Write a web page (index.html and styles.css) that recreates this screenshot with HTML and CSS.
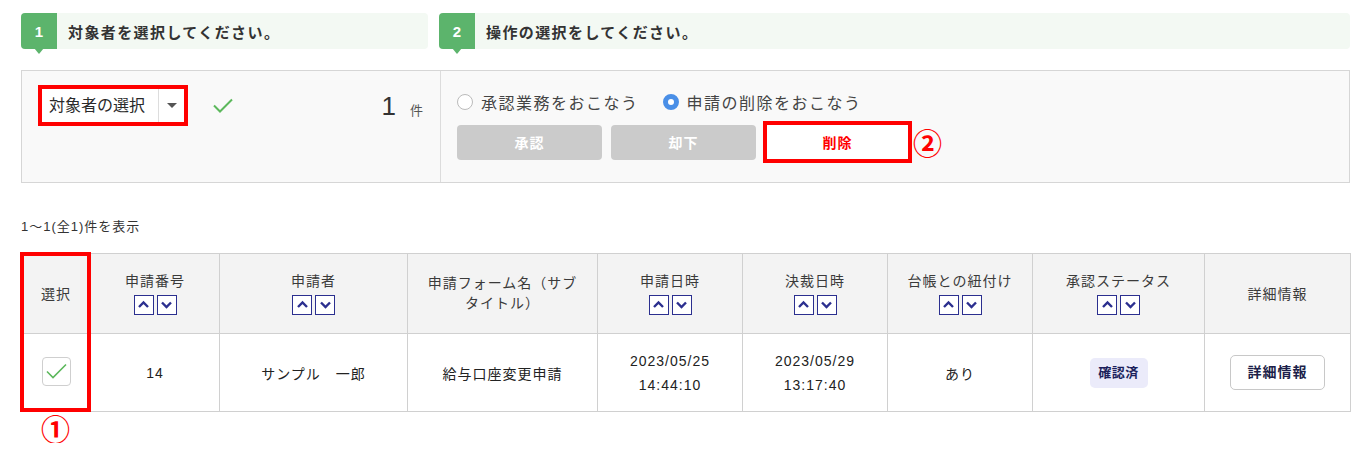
FILE: index.html
```html
<!DOCTYPE html>
<html lang="ja">
<head>
<meta charset="utf-8">
<title>申請一覧</title>
<link rel="stylesheet" href="styles.css">
</head>
<body>
<div class="page">
  <div class="steps">
    <div class="step step1"><span class="badge">1</span><span class="step-title">対象者を選択してください。</span></div>
    <div class="step step2"><span class="badge">2</span><span class="step-title">操作の選択をしてください。</span></div>
  </div>

  <div class="panel">
    <div class="panel-left">
      <div class="hl-select">
        <div class="select"><span class="select-text">対象者の選択</span><span class="select-caret"><span class="tri"></span></span></div>
      </div>
      <svg class="ok" width="20" height="15" viewBox="0 0 20 15"><polyline points="1,7.5 7,13.5 19,1.5" fill="none" stroke="#5cb85c" stroke-width="2"/></svg>
      <div class="count"><span class="num">1</span><span class="unit">件</span></div>
    </div>
    <div class="panel-right">
      <div class="radios">
        <span class="radio"><span class="rdot"></span><span class="rlabel">承認業務をおこなう</span></span>
        <span class="radio on"><span class="rdot"></span><span class="rlabel">申請の削除をおこなう</span></span>
      </div>
      <div class="actions">
        <span class="btn disabled">承認</span>
        <span class="btn disabled btn2">却下</span>
        <span class="btn danger">削除</span>
        <span class="circ">②</span>
      </div>
    </div>
  </div>

  <p class="result">1〜1(全1)件を表示</p>

  <div class="table-wrap">
    <table class="list">
      <colgroup>
        <col style="width:69px"><col style="width:129px"><col style="width:188px"><col style="width:190px"><col style="width:145px"><col style="width:145px"><col style="width:145px"><col style="width:172px"><col style="width:146px">
      </colgroup>
      <thead>
        <tr>
          <th>選択</th>
          <th><div class="th-label">申請番号</div><div class="sort"><span class="sb"><svg width="17" height="17" viewBox="0 0 17 17"><polyline points="4,11 8.5,6.5 13,11" fill="none" stroke="#2b2f8f" stroke-width="2.4"/></svg></span><span class="sb"><svg width="17" height="17" viewBox="0 0 17 17"><polyline points="4,6.5 8.5,11 13,6.5" fill="none" stroke="#2b2f8f" stroke-width="2.4"/></svg></span></div></th>
          <th><div class="th-label">申請者</div><div class="sort"><span class="sb"><svg width="17" height="17" viewBox="0 0 17 17"><polyline points="4,11 8.5,6.5 13,11" fill="none" stroke="#2b2f8f" stroke-width="2.4"/></svg></span><span class="sb"><svg width="17" height="17" viewBox="0 0 17 17"><polyline points="4,6.5 8.5,11 13,6.5" fill="none" stroke="#2b2f8f" stroke-width="2.4"/></svg></span></div></th>
          <th><div class="th-label">申請フォーム名（サブ<br>タイトル）</div></th>
          <th><div class="th-label">申請日時</div><div class="sort"><span class="sb"><svg width="17" height="17" viewBox="0 0 17 17"><polyline points="4,11 8.5,6.5 13,11" fill="none" stroke="#2b2f8f" stroke-width="2.4"/></svg></span><span class="sb"><svg width="17" height="17" viewBox="0 0 17 17"><polyline points="4,6.5 8.5,11 13,6.5" fill="none" stroke="#2b2f8f" stroke-width="2.4"/></svg></span></div></th>
          <th><div class="th-label">決裁日時</div><div class="sort"><span class="sb"><svg width="17" height="17" viewBox="0 0 17 17"><polyline points="4,11 8.5,6.5 13,11" fill="none" stroke="#2b2f8f" stroke-width="2.4"/></svg></span><span class="sb"><svg width="17" height="17" viewBox="0 0 17 17"><polyline points="4,6.5 8.5,11 13,6.5" fill="none" stroke="#2b2f8f" stroke-width="2.4"/></svg></span></div></th>
          <th><div class="th-label">台帳との紐付け</div><div class="sort"><span class="sb"><svg width="17" height="17" viewBox="0 0 17 17"><polyline points="4,11 8.5,6.5 13,11" fill="none" stroke="#2b2f8f" stroke-width="2.4"/></svg></span><span class="sb"><svg width="17" height="17" viewBox="0 0 17 17"><polyline points="4,6.5 8.5,11 13,6.5" fill="none" stroke="#2b2f8f" stroke-width="2.4"/></svg></span></div></th>
          <th><div class="th-label">承認ステータス</div><div class="sort"><span class="sb"><svg width="17" height="17" viewBox="0 0 17 17"><polyline points="4,11 8.5,6.5 13,11" fill="none" stroke="#2b2f8f" stroke-width="2.4"/></svg></span><span class="sb"><svg width="17" height="17" viewBox="0 0 17 17"><polyline points="4,6.5 8.5,11 13,6.5" fill="none" stroke="#2b2f8f" stroke-width="2.4"/></svg></span></div></th>
          <th>詳細情報</th>
        </tr>
      </thead>
      <tbody>
        <tr>
          <td><span class="cb"><svg width="27" height="27" viewBox="0 0 27 27"><polyline points="4,13.5 10,19.5 23,6.5" fill="none" stroke="#5cb85c" stroke-width="1.6"/></svg></span></td>
          <td>14</td>
          <td>サンプル　一郎</td>
          <td>給与口座変更申請</td>
          <td class="dt">2023/05/25<br>14:44:10</td>
          <td class="dt">2023/05/29<br>13:17:40</td>
          <td>あり</td>
          <td><span class="status">確認済</span></td>
          <td><span class="detail">詳細情報</span></td>
        </tr>
      </tbody>
    </table>
    <div class="mark"></div>
  </div>
  <div class="circ circ1">①</div>
</div>
</body>
</html>
```

FILE: styles.css
```css
* { box-sizing: border-box; }
html, body { margin: 0; padding: 0; background: #fff; }
body {
  font-family: "Liberation Sans", "Noto Sans CJK JP", sans-serif;
  color: #2a2a2a;
}
.page { padding-left: 21px; width: 1350px; }

/* steps */
.steps { display: flex; gap: 11px; margin-top: 13px; height: 36px; }
.step { display: flex; align-items: center; background: #f3f9f3; border-radius: 4px; height: 36px; }
.step1 { width: 407px; }
.step2 { flex: 1; }
.badge {
  position: relative;
  width: 36px; height: 36px;
  background: #5cb46c; color: #fff;
  border-radius: 4px 0 0 4px;
  display: flex; align-items: center; justify-content: center;
  font-weight: bold; font-size: 15px;
}
.badge::after {
  content: ""; position: absolute; left: 13px; bottom: -5px;
  border-left: 5px solid transparent; border-right: 5px solid transparent;
  border-top: 6px solid #5cb46c;
}
.step-title { padding-left: 11px; font-size: 15px; font-weight: bold; letter-spacing: 1.4px; color: #333; }

/* panel */
.panel {
  margin-top: 21px; height: 113px;
  border: 1px solid #d6d6d6; background: #f9f9f9;
  display: flex;
}
.panel-left {
  width: 419px; border-right: 1px solid #dcdcdc;
  display: flex; align-items: flex-start;
  padding: 14px 17px 0 16px;
}
.hl-select { border: 4px solid #f00; }
.select { display: flex; height: 33px; width: 142px; background: #fff; }
.select-text { width: 116px; padding-left: 7px; font-size: 16px; line-height: 33px; color: #2a2a2a; }
.select-caret { width: 26px; border-left: 1px solid #ddd; display: flex; align-items: center; justify-content: center; }
.tri { border-left: 5px solid transparent; border-right: 5px solid transparent; border-top: 5px solid #555; }
.ok { margin-left: 25px; margin-top: 13px; }
.count { margin-left: auto; margin-top: 8px; display: flex; align-items: baseline; }
.num { font-size: 26px; line-height: 26px; color: #333; }
.unit { font-size: 13px; margin-left: 14px; color: #555; }

.panel-right { flex: 1; padding: 22px 17px 0 16px; display: flex; flex-direction: column; }
.radios { display: flex; align-items: center; height: 17px; }
.radio { display: flex; align-items: center; margin-right: 24px; }
.rdot { width: 16px; height: 16px; border-radius: 50%; border: 1px solid #bbb; background: #fff; margin-right: 8px; }
.radio.on .rdot { border: 5px solid #4a8fe7; background: #fff; }
.rlabel { font-size: 16px; letter-spacing: 1.5px; color: #444; }
.actions { display: flex; align-items: center; margin-top: 11px; }
.btn {
  width: 145px; height: 35px; border-radius: 4px;
  display: flex; align-items: center; justify-content: center;
  font-size: 14px; font-weight: bold; letter-spacing: 1px;
}
.btn.disabled { background: #cbcbcb; color: #fff; }
.btn2 { margin-left: 9px; }
.btn.danger {
  margin-left: 7px; width: 149px; height: 42px; border-radius: 0;
  border: 4px solid #f00; background: #fff; color: #f00;
}
.circ { color: #f00; font-weight: bold; font-size: 29px; line-height: 30px; font-family: "Noto Sans CJK JP", sans-serif; }
.actions .circ { margin-left: 1px; }

.result { margin: 34px 0 0; font-size: 13px; line-height: 20px; color: #333; letter-spacing: 1px; }

/* table */
.table-wrap { position: relative; margin-top: 16px; width: 1329px; }
.list { width: 1329px; table-layout: fixed; border-collapse: collapse; }
.list th, .list td { border: 1px solid #d0d0d0; text-align: center; vertical-align: middle; padding: 0; letter-spacing: 1px; }
.list th { background: #f3f3f3; height: 80px; font-weight: normal; font-size: 14px; color: #3a3a3a; line-height: 20px; }
.th-label { margin-top: -2px; }
.list td { height: 78px; font-size: 14px; color: #222; background: #fff; }
.list td.dt { line-height: 24px; }
.sort { display: flex; justify-content: center; gap: 3px; margin-top: 4px; }
.sb { width: 20px; height: 20px; border: 1.5px solid #2b2f8f; background: #fff; display: flex; align-items: center; justify-content: center; }
.cb { display: inline-flex; width: 29px; height: 29px; border: 1px solid #cfcfcf; border-radius: 4px; background: #fff; vertical-align: middle; margin-top: -2px; }
.status { display: inline-block; width: 58px; height: 30px; line-height: 30px; background: #ebebfa; color: #1c1f5c; font-weight: bold; font-size: 13px; border-radius: 5px; letter-spacing: 0.5px; }
.detail { display: inline-block; width: 95px; height: 35px; line-height: 33px; border: 1px solid #c8c8c8; border-radius: 5px; background: #fff; color: #1c1f4a; font-weight: bold; font-size: 14px; }
.mark { position: absolute; left: -1px; top: -1px; width: 71px; height: 160px; border: 4px solid #f00; pointer-events: none; }
.circ1 { margin-left: 20px; margin-top: 1px; width: 30px; }
```
